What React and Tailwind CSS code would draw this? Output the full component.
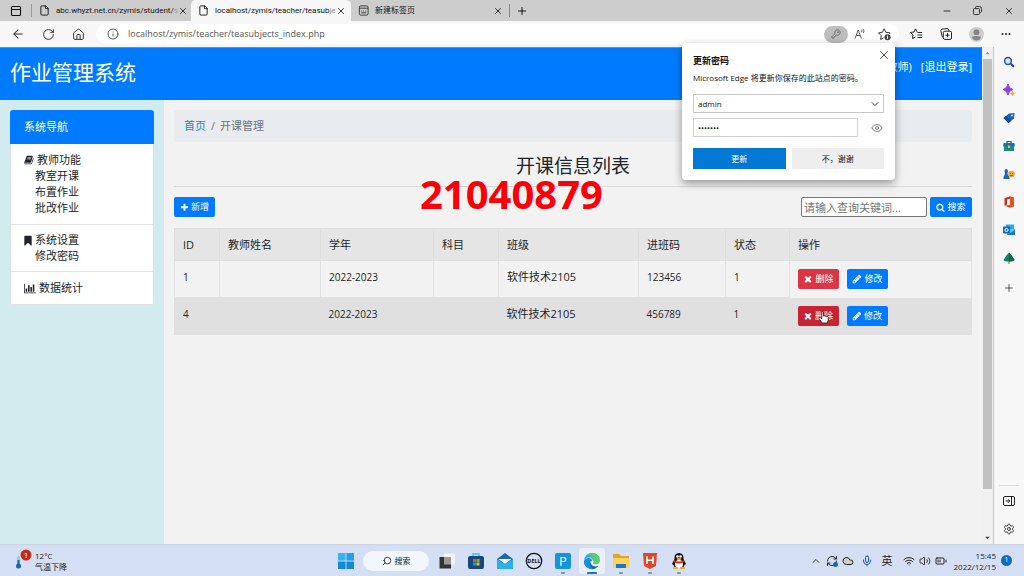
import {
  ArrowLeft, BatteryMedium, ChevronDown, ChevronUp, Cloud, Ellipsis, Eye,
  File, House, Info, KeyRound, Mic, Minus, PanelTop, Plus, RefreshCw, RotateCw, Search, Settings, Volume2, Wifi, X,
} from 'lucide-react'

const courses = [
  { id: 1, teacher: '', year: '2022-2023', subject: '', className: '软件技术2105', code: '123456', status: 1 },
  { id: 4, teacher: '', year: '2022-2023', subject: '', className: '软件技术2105', code: '456789', status: 1 },
]

const columns = [
  { label: 'ID', width: 'w-[45px]' },
  { label: '教师姓名', width: 'w-[101px]' },
  { label: '学年', width: 'w-[113px]' },
  { label: '科目', width: 'w-[65px]' },
  { label: '班级', width: 'w-[140px]' },
  { label: '进班码', width: 'w-[87px]' },
  { label: '状态', width: 'w-[64px]' },
  { label: '操作', width: '' },
]

const glyphs = {
  plus: 'M1600 736v192q0 40-28 68t-68 28h-416v416q0 40-28 68t-68 28H800q-40 0-68-28t-28-68v-416H288q-40 0-68-28t-28-68V736q0-40 28-68t68-28h416V224q0-40 28-68t68-28h192q40 0 68 28t28 68v416h416q40 0 68 28t28 68z',
  times: 'M1490 1322q0 40-28 68l-136 136q-28 28-68 28t-68-28l-294-294-294 294q-28 28-68 28t-68-28l-136-136q-28-28-28-68t28-68l294-294-294-294q-28-28-28-68t28-68l136-136q28-28 68-28t68 28l294 294 294-294q28-28 68-28t68 28l136 136q28 28 28 68t-28 68l-294 294 294 294q28 28 28 68z',
  search: 'M1216 832q0-185-131.5-316.5t-316.5-131.5-316.5 131.5-131.5 316.5 131.5 316.5 316.5 131.5 316.5-131.5 131.5-316.5zm512 832q0 52-38 90t-90 38q-54 0-90-38l-343-342q-179 124-399 124-143 0-273.5-55.5t-225-150-150-225-55.5-273.5 55.5-273.5 150-225 225-150 273.5-55.5 273.5 55.5 225 150 150 225 55.5 273.5q0 220-124 399l343 343q37 37 37 90z',
  pencil: 'M491 1536l91-91-235-235-91 91v107h128v128h107zm523-928q0-22-22-22-10 0-17 7l-542 542q-7 7-7 17 0 22 22 22 10 0 17-7l542-542q7-7 7-17zm-54-192l416 416-832 832h-416v-416zm683 96q0 53-37 90l-166 166-416-416 166-165q36-38 90-38 53 0 91 38l235 234q37 39 37 91z',
  book: 'M1639 478q40 57 18 129l-275 906q-19 64-76.5 107.5T1183 1664H260q-77 0-148.5-53.5T12 1479q-24-67-2-127 0-4 3-27t4-37q1-8-3-21.5t-3-19.5q2-11 8-21t16.5-23.5T52 1179q23-38 45-91.5t30-91.5q3-10 .5-30t-.5-28q3-11 17-28t17-23q21-36 42-92t25-90q1-9-2.5-32t.5-28q4-13 22-30.5t22-22.5q19-26 42.5-84.5T340 411q1-8-3-25.5t-2-26.5q2-8 9-18t18-23 17-21q8-12 16.5-30.5t15-35 16-36 19.5-32T469.5 140t36-11.5T553 134l-1 3q38-9 51-9h761q74 0 114 56t18 130l-274 906q-36 119-71.5 153.5T1022 1408H153q-27 0-38 15-11 16-1 43 24 70 144 70h923q29 0 56-15.5t35-41.5l300-987q7-22 5-57 38 15 59 43zm-1064 2q-4 13 2 22.5t20 9.5h608q13 0 25.5-9.5T1247 480l21-64q4-13-2-22.5t-20-9.5H638q-13 0-25.5 9.5T596 416zm-83 256q-4 13 2 22.5t20 9.5h608q13 0 25.5-9.5T1164 736l21-64q4-13-2-22.5t-20-9.5H555q-13 0-25.5 9.5T513 672z',
  bookmark: 'M300 128h1000q60 0 100 90v1450q-30 90-120 60L800 1270l-480 458q-90 30-120-60V218q30-90 100-90z',
  chart: 'M0 128h128v1408h1792v128H0zM256 896h256v512H256zM640 384h256v1024H640zM1024 640h256v768h-256zM1408 256h256v1152h-256z',
}

const Glyph = ({ name, className, box = '0 0 1792 1792' }) => (
  <svg viewBox={box} fill="currentColor" className={className} aria-hidden="true">
    <path d={glyphs[name]} />
  </svg>
)

const PageTab = ({ title, icon, className }) => (
  <div className={`flex items-center pl-[7px] pr-[6px] ${className}`}>
    {icon || <File className="size-[11px] shrink-0" strokeWidth={2} />}
    <span className="ml-[6px] flex-1 whitespace-nowrap font-['Roboto','Noto_Sans_CJK_SC',sans-serif] text-[8px] leading-3">
      {title}
    </span>
    <button aria-label="关闭标签页">
      <X className="size-[10px]" strokeWidth={2} />
    </button>
  </div>
)

const NewTabIcon = () => (
  <svg viewBox="0 0 12 12" className="size-[11px] shrink-0" fill="none" stroke="#333">
    <rect x="1.5" y="1" width="9.5" height="10" rx="1.5" />
    <path d="M1.5 3.500h9.500M3.500 6.500h1M5.700 6.500h1M8 6.500h1M3.500 8.500h5.500" />
  </svg>
)

const TabStrip = () => (
  <div className="flex h-[21px] bg-[#cdcdcd] text-[#111]">
    <button aria-label="标签页操作" className="flex w-[31px] items-center justify-center">
      <PanelTop className="size-3" strokeWidth={2.2} />
    </button>
    <span className="my-1 w-px bg-[#999]" />
    <PageTab title={<>abc.whyzt.net.cn/zymis/student/<span className="text-[#999]">s</span></>} className="w-[159px]" />
    <PageTab title={<>localhost/zymis/teacher/teasub<span className="text-[#999]">je</span></>} className="w-40 rounded-t-[5px] bg-[#f7f7f7]" />
    <PageTab title="新建标签页" icon={<NewTabIcon />} className="w-[158px]" />
    <span className="my-1 w-px bg-[#888]" />
    <button aria-label="新建标签页" className="flex w-6 items-center justify-center">
      <Plus className="size-3" strokeWidth={2} />
    </button>
    <div className="ml-auto flex">
      <button aria-label="最小化" className="flex w-[30px] items-center justify-center">
        <Minus className="size-[10px]" strokeWidth={2} />
      </button>
      <button aria-label="还原" className="flex w-[31px] items-center justify-center">
        <svg viewBox="0 0 9 9" className="size-[9px]" fill="none" stroke="#222" strokeWidth=".9">
          <rect x=".5" y="2.500" width="6" height="6" rx="1" />
          <path d="M2.500 2V1.500q0-1 1-1h3q2 0 2 2v3q0 1-1 1" />
        </svg>
      </button>
      <button aria-label="关闭" className="flex w-[31px] items-center justify-center">
        <X className="size-[10px]" strokeWidth={2} />
      </button>
    </div>
  </div>
)

const toolButton = 'flex w-[30px] items-center justify-center'

const Toolbar = () => (
  <div className="flex h-[26px] items-center bg-[#f7f7f7] px-[3px] text-[#333]">
    <button aria-label="后退" className={toolButton}><ArrowLeft className="size-[14px]" strokeWidth={1.8} /></button>
    <button aria-label="刷新" className={toolButton}><RotateCw className="size-[13px]" strokeWidth={1.8} /></button>
    <button aria-label="主页" className={toolButton}>
      <House className="size-[13px]" strokeWidth={1.8} />
    </button>
    <div className="ml-[3px] flex h-5 flex-1 items-center rounded-full bg-white pl-[11px] pr-[3px]">
      <Info className="size-3" strokeWidth={1.6} />
      <input
        aria-label="地址"
        defaultValue="localhost/zymis/teacher/teasubjects_index.php"
        className="ml-[9px] min-w-0 flex-1 text-[9px] leading-4 text-[#555] outline-none"
      />
      <button aria-label="密码" className="flex h-[17px] w-6 items-center justify-center rounded-full bg-[#bdbdbd]">
        <KeyRound className="size-[10px] text-[#555]" strokeWidth={1.8} />
      </button>
      <button aria-label="大声朗读" className="flex w-6 items-center justify-center">
        <svg viewBox="0 0 12 12" className="size-3" fill="none" stroke="currentColor" strokeWidth=".8">
          <path d="M1 10.500 4.200 2l3.200 8.500M2.200 7.500h4M7.200 1.500q1.200 1.300.2 2.800M9 .8q1.800 2 .4 4.300" />
        </svg>
      </button>
      <button aria-label="收藏" className="flex w-6 items-center justify-center">
        <svg viewBox="0 0 12 12" className="size-[13px]" fill="none" stroke="currentColor" strokeWidth=".9">
          <path d="M10.800 5.300 11 4.400 7.300 4 5.600.7 4 4 .5 4.500 3 7.100l-.6 3.500L5.200 9" />
          <circle cx="8.800" cy="8.600" r="2.800" fill="#444" stroke="none" />
          <path d="M8.800 7v3.200" stroke="#fff" />
        </svg>
      </button>
    </div>
    <button aria-label="收藏夹" className="ml-[2px] flex w-[30px] items-center justify-center">
      <svg viewBox="0 0 13 12" className="h-3 w-[13px]" fill="none" stroke="#222" strokeWidth="1">
        <path d="M7 3.800 5.500.8 4 4 .6 4.500 3 7l-.5 3.600 3-1.700M7.500 4.500H12M7.500 7H12M7.500 9.500H12" />
      </svg>
    </button>
    <button aria-label="集锦" className={toolButton}>
      <svg viewBox="0 0 12 12" className="size-3" fill="none" stroke="#222" strokeWidth="1">
        <path d="M3 8.800H2.200L.8 2.500 2 1l6-.4L9 2.800M7.500 5.200v4M5.500 7.200h4" />
        <rect x="3.300" y="3.200" width="8.200" height="8.200" rx="1.500" />
      </svg>
    </button>
    <button aria-label="用户" className={toolButton}>
      <svg viewBox="0 0 14 14" className="size-[15px]">
        <circle cx="7" cy="7" r="7" fill="#d0ceca" />
        <circle cx="7" cy="4.800" r="2.700" fill="#858585" />
        <path d="M2.800 9.200Q7 7.500 11.200 9.200 10.800 12.500 7 12.500T2.800 9.200" fill="#858585" />
      </svg>
    </button>
    <button aria-label="更多" className={toolButton}><Ellipsis className="size-3" strokeWidth={2.4} /></button>
  </div>
)

const PasswordPrompt = () => (
  <form
    onSubmit={(e) => e.preventDefault()}
    className="absolute right-[129px] top-[43px] z-20 w-[213px] rounded-[4px] bg-white px-[11px] pb-[11px] pt-[12px] text-[8px] text-[#111] shadow-[0_3px_9px_rgba(0,0,0,0.4)]"
  >
    <button type="button" aria-label="关闭" className="absolute right-[4px] top-[5px]">
      <X className="size-[14px]" strokeWidth={1.3} />
    </button>
    <h2 className="text-[9px] font-bold leading-3">更新密码</h2>
    <p className="mt-[5px] whitespace-nowrap leading-3">Microsoft Edge 将更新你保存的此站点的密码。</p>
    <div className="relative mt-[10px]">
      <select aria-label="用户名" className="block h-[19px] w-full appearance-none border border-[#c8c8c8] bg-white px-1 text-[8px]">
        <option>admin</option>
      </select>
      <ChevronDown className="pointer-events-none absolute right-[3px] top-[4px] size-3" strokeWidth={1.6} />
    </div>
    <div className="mt-[5px] flex items-center">
      <input
        type="password"
        aria-label="密码"
        defaultValue="1234567"
        className="h-[19px] w-[165px] border border-[#d0d0d0] px-1 text-[8px] outline-none"
      />
      <button type="button" aria-label="显示密码" className="ml-[13px]"><Eye className="size-3 text-[#555]" strokeWidth={1.5} /></button>
    </div>
    <div className="mt-[11px] grid grid-cols-2 gap-[6px]">
      <button className="h-[21px] bg-[#0078d4] text-white">更新</button>
      <button type="button" className="h-[21px] bg-[#eee]">不，谢谢</button>
    </div>
  </form>
)

const SideNav = () => (
  <aside className="w-[164px] shrink-0 bg-[#d1ebef] p-[10px] text-[11px] leading-4">
    <nav className="overflow-hidden rounded-[3px]">
      <h2 className="bg-[#007bff] px-[14px] py-[9px] text-white">系统导航</h2>
      <div className="divide-y divide-[#e2e4e5] border-x border-b border-[#dde3e5] bg-white text-[#212529]">
        <div className="px-[13px] py-2">
          <a href="#teacher" className="flex items-center gap-[3px]"><Glyph name="book" box="0 0 1664 1792" className="size-[10px]" />教师功能</a>
          <a href="#open" className="block pl-[11px]">教室开课</a>
          <a href="#assign" className="block pl-[11px]">布置作业</a>
          <a href="#review" className="block pl-[11px]">批改作业</a>
        </div>
        <div className="px-[13px] py-[7px]">
          <a href="#settings" className="flex items-center gap-[3px]"><Glyph name="bookmark" box="200 0 1200 1792" className="h-[11px] w-2" />系统设置</a>
          <a href="#password" className="block pl-[11px]">修改密码</a>
        </div>
        <div className="px-[13px] py-2">
          <a href="#stats" className="flex items-center gap-[3px]"><Glyph name="chart" box="0 0 1920 1792" className="h-[11px] w-3" />数据统计</a>
        </div>
      </div>
    </nav>
  </aside>
)

const smallButton = 'inline-flex h-5 items-center justify-center gap-[2px] rounded-[2px] text-[9px] leading-4 text-white'

const HandPointer = () => (
  <svg viewBox="0 0 12 14" className="absolute left-[20px] top-[4px] h-[14px] w-3" fill="#fff" stroke="#111" strokeWidth=".8">
    <path d="M4 13 1 8.500Q.8 7 2.500 7.500L3.800 9V2Q4.700.8 5.500 2v4Q6.300 5.300 7 6.300 8 5.600 8.600 6.700 10 6 10.300 7.500V10L9.300 13Z" />
  </svg>
)

const CourseTable = () => (
  <table className="mt-[11px] w-full table-fixed border-collapse border border-[#dfe1e3] text-left text-[11px] leading-4 text-[#212529]">
    <thead>
      <tr className="h-8 bg-[#e5e5e5]">
        {columns.map((col) => (
          <th key={col.label} className={`border border-[#dcdee0] px-2 font-normal ${col.width}`}>{col.label}</th>
        ))}
      </tr>
    </thead>
    <tbody>
      {courses.map((row, i) => (
        <tr key={row.id} className={`h-[37px] align-top ${i === 1 ? 'bg-[#e0e0e0]' : ''}`}>
          {[row.id, row.teacher, row.year, row.subject, row.className, row.code, row.status].map((value, n) => (
            <td key={n} className={`px-2 pt-2 ${i === 0 ? 'border border-[#dfe1e3]' : ''} ${n === 4 ? '' : 'text-[10px]'}`}>{value}</td>
          ))}
          <td className="px-2 pt-2">
            <div className="flex gap-2">
              <button className={`${smallButton} relative w-[41px] ${i === 1 ? 'bg-[#c82333]' : 'bg-[#dc3545]'}`}>
                <Glyph name="times" className="size-[10px]" />删除
                {i === 1 && <HandPointer />}
              </button>
              <button className={`${smallButton} w-[41px] bg-[#007bff]`}>
                <Glyph name="pencil" className="size-[10px]" />修改
              </button>
            </div>
          </td>
        </tr>
      ))}
    </tbody>
  </table>
)

const CoursePage = () => (
  <div className="flex flex-1 flex-col bg-[#f2f2f2]">
    <header className="flex h-[53px] justify-between border-t border-[#5596cc] bg-[#007bff] px-[10px] text-white">
      <h1 className="pt-2 text-[21px] leading-8">作业管理系统</h1>
      <div className="flex gap-[9px] pt-[11px] text-[11px] leading-4">
        <span>(教师)</span>
        <a href="#logout">[退出登录]</a>
      </div>
    </header>
    <div className="flex flex-1">
      <SideNav />
      <main className="relative min-w-0 flex-1 px-[10px] pt-[10px]">
        <nav aria-label="breadcrumb" className="flex gap-[5px] rounded-[3px] bg-[#e9ecef] px-[10px] py-2 text-[11px] leading-4 text-[#6c757d]">
          <a href="#home" className="text-[#1f7fcb]">首页</a>
          <span>/</span>
          <span>开课管理</span>
        </nav>
        <h2 className="mt-3 text-center text-[19px] leading-6 text-[#212529]">开课信息列表</h2>
        <hr className="mt-2 border-[#d9d9d9]" />
        <p className="pointer-events-none absolute left-[256px] top-[79px] text-[40px] font-bold leading-[30px] text-[#fb0007]">21040879</p>
        <div className="mt-[10px] flex justify-between">
          <button className={`${smallButton} w-[41px] bg-[#007bff]`}>
            <Glyph name="plus" className="size-[9px]" />新增
          </button>
          <form onSubmit={(e) => e.preventDefault()} className="flex gap-[3px]">
            <input
              aria-label="关键词"
              placeholder="请输入查询关键词..."
              className="h-5 w-[126px] rounded-[2px] border border-[#767676] bg-white px-[2px] text-[11px] placeholder:text-[#757575]"
            />
            <button className={`${smallButton} w-[42px] bg-[#007bff]`}>
              <Glyph name="search" className="size-[9px]" />搜索
            </button>
          </form>
        </div>
        <CourseTable />
      </main>
    </div>
  </div>
)

const Scrollbar = () => (
  <div className="flex w-3 shrink-0 flex-col border-r border-[#c4c4c4] bg-[#f1f1f1] px-[1px]" aria-hidden="true">
    <svg viewBox="0 0 10 12" className="h-3"><path d="M2.500 7.500h5L5 4.500z" fill="#999" /></svg>
    <span className="flex-[10] bg-[#c1c1c1]" />
    <span className="flex-1" />
    <svg viewBox="0 0 10 12" className="h-3"><path d="M2.500 4.500h5L5 7.500z" fill="#444" /></svg>
  </div>
)

const sideApps = [
  { name: '搜索', art: <><circle cx="5" cy="5" r="3.400" fill="#d6ebff" stroke="#1d4fb8" strokeWidth="1.500" /><path d="m7.800 7.800 3.200 3" stroke="#3a35b0" strokeWidth="2" /></> },
  { name: '发现', art: <><path d="M5 0Q5.700 4.500 10 5.500 5.700 6.500 5 11 4.300 6.500 0 5.500 4.300 4.500 5 0Z" fill="#8a3fe0" stroke="#8a3fe0" /><path d="M9.500 7q.3 2 2.500 2.500Q9.800 10 9.500 12 9.200 10 7 9.500 9.200 9 9.500 7Z" fill="#edae2b" stroke="#edae2b" strokeWidth=".6" /></> },
  { name: '购物', art: <><path d="M6 1.500 11.500 1 11 6.500 5.500 11 .5 6Z" fill="#1663c4" /><path d="M.5 6 3 4l5 5-2.500 2Z" fill="#124a96" /><circle cx="9" cy="3.500" r="1" fill="#ffe07a" /></> },
  { name: '工具', art: <><path d="M4 3V1.500h4V3" fill="none" stroke="#1858a0" strokeWidth="1.200" /><rect x=".3" y="3" width="11.400" height="4" rx="1" fill="#2469c5" /><path d="M1 6h10v5H1z" fill="#188a78" /><path d="M5 5.500h2V8H5z" fill="#f5c23a" /></> },
  { name: '游戏', art: <><path d="M1.500 3Q1.800 1 3.300 1T5 3L4.500 6 6.500 9v2H.5V9L2 6Z" fill="#2165bd" /><circle cx="8.500" cy="6" r="3.300" fill="#e7a936" /><path d="M7.500 5v1M9.500 5v1M7 7.500h3" stroke="#995000" strokeWidth=".7" /></> },
  { name: 'Microsoft 365', art: <><path d="M7 .3 11 1.500v9L7 11.700Z" fill="#e8501f" /><path d="M7 .3 1.500 2.300V9.500L4 8.500V3.500l3-.8ZM1.500 9.500 7 11.700V9.200Z" fill="#c2331a" /></> },
  { name: 'Outlook', art: <><path d="M3 .5h8v5H3z" fill="#28a8e8" /><path d="M4 5h8v6H4z" fill="#50c8ef" /><path d="m4 11 8-5v5Z" fill="#1677ce" /><rect y="2.500" width="7" height="7" rx="1" fill="#0f67b7" /><circle cx="3.500" cy="6" r="1.600" fill="none" stroke="#fff" /></> },
  { name: '种树', art: <><path d="M5.300 8h1.400v4H5.300z" fill="#c3822d" /><path d="M6 .5 9 4l2.500 4Q11 9.500 6 9.500T.5 8L3 4Z" fill="#168064" /><path d="M6 .5 9 4l2.500 4Q10 9.300 6 9.500Z" fill="#0e6552" /></> },
]

const EdgeSidebar = () => (
  <aside className="flex w-[30px] shrink-0 flex-col items-center bg-[#f7f7f7] pt-[9px] text-[#333]">
    <div className="flex flex-col gap-4">
      {sideApps.map((app) => (
        <button key={app.name} aria-label={app.name}>
          <svg viewBox="0 0 12 12" className="size-3" fill="none">{app.art}</svg>
        </button>
      ))}
    </div>
    <button aria-label="添加" className="mt-[18px]"><Plus className="size-3" strokeWidth={1.6} /></button>
    <span className="mt-auto h-px w-5 bg-[#ddd]" />
    <button aria-label="隐藏边栏" className="mt-[9px]">
      <svg viewBox="0 0 12 12" className="size-3" fill="none" stroke="#222">
        <rect x=".5" y="1.500" width="11" height="9" rx="1.500" />
        <path d="M8.500 1.500v9M2.500 6h4M5 4.200 6.800 6 5 7.800" />
      </svg>
    </button>
    <button aria-label="设置" className="mb-[9px] mt-4"><Settings className="size-3" strokeWidth={1.8} /></button>
  </aside>
)

const taskApps = [
  { name: '任务视图', art: <><path d="M6 1.500h11v11H6z" fill="#f4f4f4" /><path d="M1.500 5H13v11.500H1.500z" fill="#333" /><path d="M6 5h7v7.500H6z" fill="#999" /></> },
  { name: '应用商店', art: <><path d="M6 5V2h6v3" fill="none" stroke="#50b9ea" strokeWidth="1.500" /><rect x="1" y="4" width="16" height="13" rx="2" fill="#164a7d" /><path d="M6 7h3v3H6z" fill="#f25022" /><path d="M9.500 7h3v3h-3z" fill="#7fba00" /><path d="M6 10.500h3v3H6z" fill="#00a4ef" /><path d="M9.500 10.500h3v3h-3z" fill="#ffb900" /></> },
  { name: '邮件', art: <><path d="M1 7 9 1l8 6v10H1Z" fill="#1569ae" /><path d="M2.500 7h13L9 12Z" fill="#fff" /><path d="m1 7 8 5 8-5v10H1Z" fill="#2ab0ed" /></> },
  { name: 'Dell', art: <><circle cx="9" cy="9" r="7.700" fill="none" stroke="#111" strokeWidth="1.300" /><text x="9" y="11" textAnchor="middle" fontSize="5.500" fontWeight="bold" fill="#111">DELL</text></> },
  { name: 'P', running: true, art: <><rect x="1" y="1" width="16" height="16" rx="2" fill="#1593df" /><text x="9" y="14" textAnchor="middle" fontSize="13" fill="#fff">P</text></> },
  {
    name: 'Microsoft Edge',
    active: true,
    art: (
      <>
        <path d="M1 9a8 8 0 0 0 14.500 4.700Q13 15 10 14 7 12.500 7.500 9.500 5 6 1 9Z" fill="#1565b8" />
        <path d="M1 9.500Q2 5.500 6 6q3.500.5 3 3.500-1.500-1.500-2.500 1-.5 4 3.500 6.300Q9 17 8 16.900 1.300 16 1 9.500Z" fill="#1b8fdb" />
        <path d="M1 9Q1.800 1 9 1q5 0 7 4L10 9.500Q9.500 5.500 6 5.500 2.500 5.500 1 9Z" fill="#2fb5c4" />
        <path d="M9 1q7.500.3 8 7 0 4.200-4.500 4.200-2.700 0-2.500-1.200 1-1 .5-3.500-.5-3-4-4.500Q6 1.200 9 1Z" fill="#5fcb6a" />
      </>
    ),
  },
  { name: '文件资源管理器', running: true, art: <><path d="M1 2h6l2 2h8v12H1Z" fill="#e7a321" /><path d="M1 6h16v10H1Z" fill="#ffd25b" /><path d="M4 12h10v4H4Z" fill="#1978c7" /></> },
  { name: 'HBuilder', running: true, art: <><path d="M2 1h14l-1 13-6 3-6-3Z" fill="#d84b2b" /><path d="M6 4.500v7.500M12 4.500v7.500M6 8.200h6" stroke="#fff" strokeWidth="1.600" /></> },
  { name: 'QQ', running: true, art: <><path d="M4.500 7Q4 1 9 1t4.500 6L16 12l-1.500 1-1 2h-9l-1-2L2 12Z" fill="#111" /><ellipse cx="9" cy="12" rx="4" ry="4" fill="#fff" /><path d="M4 8q5 3 10 0l.5 2Q9 13 3.500 10Z" fill="#e22" /><circle cx="7.500" cy="4.500" r="1.300" fill="#fff" /><circle cx="10.500" cy="4.500" r="1.300" fill="#fff" /><ellipse cx="9" cy="7" rx="2.500" ry="1" fill="#f8b01c" /><path d="M3 15h5v2H3zM10 15h5v2h-5z" fill="#f8b01c" /></> },
]

const Taskbar = () => (
  <footer className="grid h-8 grid-cols-[1fr_auto_1fr] items-center border-t border-[#ccd5e6] bg-[#d5dff3] text-[8px] text-[#222]">
    <button className="ml-3 flex items-center gap-[2px] justify-self-start text-left leading-[11px]">
      <svg viewBox="0 0 21 24" className="h-6 w-[21px]">
        <rect x="5" y="7" width="3" height="12" rx="1.500" fill="#8fcbe7" />
        <path d="M5.500 11h2v5h-2z" fill="#1569b2" />
        <circle cx="6.500" cy="17" r="2.500" fill="#1569b2" />
        <circle cx="14" cy="6" r="5.500" fill="#c42b1c" />
        <text x="14" y="9" textAnchor="middle" fontSize="8" fill="#fff">1</text>
      </svg>
      <span>12°C<br />气温下降</span>
    </button>
    <div className="flex items-center">
      <button aria-label="开始" className="flex w-[29px] justify-center">
        <svg viewBox="0 0 16 16" className="size-4" fill="#1688dc">
          <path d="M0 0h7.600v7.600H0z" fill="#35b4f0" /><path d="M8.400 0H16v7.600H8.400z" fill="#24a0e8" /><path d="M0 8.400h7.600V16H0zM8.400 8.400H16V16H8.400z" />
        </svg>
      </button>
      <button className="mx-[3px] flex h-5 w-[66px] items-center justify-center gap-[3px] rounded-full bg-[#f2f6fd]">
        <Search className="size-[10px] -scale-x-100" strokeWidth={2} />搜索
      </button>
      {taskApps.map((app) => (
        <button key={app.name} aria-label={app.name} className="flex w-[29px] justify-center">
          <span className={`flex h-[26px] w-[26px] flex-col items-center rounded-[3px] pt-1 ${app.active ? 'bg-[#eaf0fb]' : ''}`}>
            <svg viewBox="0 0 18 18" className="size-[18px]">{app.art}</svg>
            {app.running && <span className="mt-[2px] h-[2px] w-1 rounded-full bg-[#888f9c]" />}
            {app.active && <span className="mt-[2px] h-[2px] w-[10px] rounded-full bg-[#1673bd]" />}
          </span>
        </button>
      ))}
    </div>
    <div className="mr-3 flex items-center justify-self-end">
      <ChevronUp className="size-3" strokeWidth={1.8} />
      <span className="relative ml-[4px]">
        <RefreshCw className="size-3" strokeWidth={2} />
        <span className="absolute bottom-0 right-0 size-[5px] rounded-full bg-[#0f6cbd]" />
      </span>
      <Cloud className="ml-[4px] size-3 fill-[#d3d0cc]" strokeWidth={2} />
      <Mic className="ml-[7px] size-3 text-[#24549c]" strokeWidth={2} />
      <span className="ml-[9px] text-[11px] leading-4">英</span>
      <Wifi className="ml-[10px] size-3" strokeWidth={2} />
      <Volume2 className="ml-[4px] size-3" strokeWidth={1.8} />
      <BatteryMedium className="ml-[4px] size-3" strokeWidth={2} />
      <time className="ml-[7px] text-right leading-[11px]">15:45<br />2022/12/15</time>
      <span className="ml-[5px] flex size-[11px] items-center justify-center rounded-full bg-[#0f6cbd] text-[7px] text-white">1</span>
    </div>
  </footer>
)

export default function App() {
  return (
    <div className="relative flex min-h-screen flex-col bg-[#f7f7f7] font-['Open_Sans','Noto_Sans_CJK_SC',sans-serif]">
      <TabStrip />
      <Toolbar />
      <div className="flex flex-1">
        <CoursePage />
        <Scrollbar />
        <EdgeSidebar />
      </div>
      <PasswordPrompt />
      <Taskbar />
    </div>
  )
}
